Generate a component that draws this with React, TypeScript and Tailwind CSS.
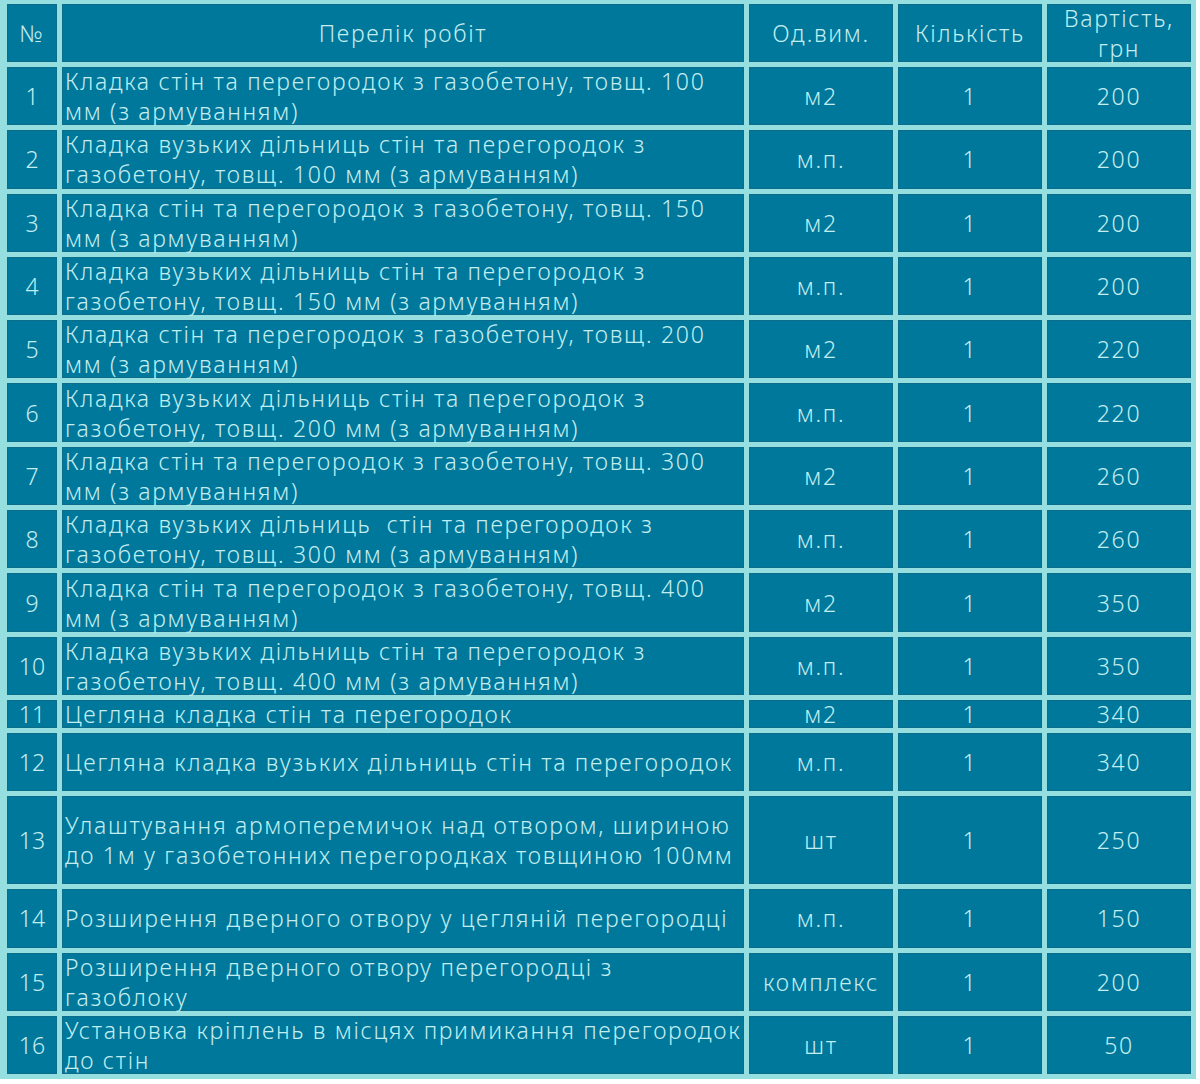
const rows: { n: string; text: React.ReactNode; unit: string; qty: string; price: string; h: string }[] = [
  { n: "1", text: <>Кладка стін та перегородок з газобетону, товщ. 100<br />мм (з армуванням)</>, unit: "м2", qty: "1", price: "200", h: "h-[58.3px]" },
  { n: "2", text: <>Кладка вузьких дільниць стін та перегородок з<br />газобетону, товщ. 100 мм (з армуванням)</>, unit: "м.п.", qty: "1", price: "200", h: "h-[58.3px]" },
  { n: "3", text: <>Кладка стін та перегородок з газобетону, товщ. 150<br />мм (з армуванням)</>, unit: "м2", qty: "1", price: "200", h: "h-[58.3px]" },
  { n: "4", text: <>Кладка вузьких дільниць стін та перегородок з<br />газобетону, товщ. 150 мм (з армуванням)</>, unit: "м.п.", qty: "1", price: "200", h: "h-[58.3px]" },
  { n: "5", text: <>Кладка стін та перегородок з газобетону, товщ. 200<br />мм (з армуванням)</>, unit: "м2", qty: "1", price: "220", h: "h-[58.3px]" },
  { n: "6", text: <>Кладка вузьких дільниць стін та перегородок з<br />газобетону, товщ. 200 мм (з армуванням)</>, unit: "м.п.", qty: "1", price: "220", h: "h-[58.3px]" },
  { n: "7", text: <>Кладка стін та перегородок з газобетону, товщ. 300<br />мм (з армуванням)</>, unit: "м2", qty: "1", price: "260", h: "h-[58.3px]" },
  { n: "8", text: <>Кладка вузьких дільниць&nbsp; стін та перегородок з<br />газобетону, товщ. 300 мм (з армуванням)</>, unit: "м.п.", qty: "1", price: "260", h: "h-[58.3px]" },
  { n: "9", text: <>Кладка стін та перегородок з газобетону, товщ. 400<br />мм (з армуванням)</>, unit: "м2", qty: "1", price: "350", h: "h-[58.3px]" },
  { n: "10", text: <>Кладка вузьких дільниць стін та перегородок з<br />газобетону, товщ. 400 мм (з армуванням)</>, unit: "м.п.", qty: "1", price: "350", h: "h-[58.3px]" },
  { n: "11", text: <>Цегляна кладка стін та перегородок</>, unit: "м2", qty: "1", price: "340", h: "h-[28px] leading-[26px]" },
  { n: "12", text: <>Цегляна кладка вузьких дільниць стін та перегородок</>, unit: "м.п.", qty: "1", price: "340", h: "h-[58.3px]" },
  { n: "13", text: <>Улаштування армоперемичок над отвором, шириною<br />до 1м у газобетонних перегородках товщиною 100мм</>, unit: "шт", qty: "1", price: "250", h: "h-[88px]" },
  { n: "14", text: <>Розширення дверного отвору у цегляній перегородці</>, unit: "м.п.", qty: "1", price: "150", h: "h-[58.3px]" },
  { n: "15", text: <>Розширення дверного отвору перегородці з<br />газоблоку</>, unit: "комплекс", qty: "1", price: "200", h: "h-[58.3px]" },
  { n: "16", text: <>Установка кріплень в місцях примикання перегородок<br />до стін</>, unit: "шт", qty: "1", price: "50", h: "h-[58.3px]" },
];

const cell = "bg-[#00789c] border border-[#0b6d8a] p-0 align-middle";

export default function App() {
  return (
    <div className="min-h-screen bg-white">
      <div className="w-[1196px] bg-[#96dfe0] pl-[2px]">
        <table
          className="w-full border-separate border-spacing-[5px] text-[23px] leading-[28px] font-light tracking-[1.7px] text-[#c3eef0] table-fixed"
          style={{ fontFamily: '"Noto Sans", "Open Sans", sans-serif', marginTop: -1 }}
        >
          <colgroup>
            <col className="w-[50px]" />
            <col />
            <col className="w-[144px]" />
            <col className="w-[144px]" />
            <col className="w-[144px]" />
          </colgroup>
          <thead>
            <tr className="h-[58px]">
              <th className={`${cell} font-light text-center`}>№</th>
              <th className={`${cell} font-light text-center`}>Перелік робіт</th>
              <th className={`${cell} font-light text-center`}>Од.вим.</th>
              <th className={`${cell} font-light text-center`}>Кількість</th>
              <th className={`${cell} font-light text-center`}>
                <div className="leading-[30px] -my-[2px]">
                  Вартість,
                  <br />
                  грн
                </div>
              </th>
            </tr>
          </thead>
          <tbody>
            {rows.map((r) => (
              <tr key={r.n} className={r.h}>
                <td className={`${cell} text-center tracking-normal`}>{r.n}</td>
                <td className={`${cell} text-left pl-[2px] whitespace-nowrap`}>
                  <div className={r.n === "11" ? "" : "leading-[30px] -my-[2px]"}>{r.text}</div>
                </td>
                <td className={`${cell} text-center`}>{r.unit}</td>
                <td className={`${cell} text-center`}>{r.qty}</td>
                <td className={`${cell} text-center`}>{r.price}</td>
              </tr>
            ))}
          </tbody>
        </table>
      </div>
    </div>
  );
}
